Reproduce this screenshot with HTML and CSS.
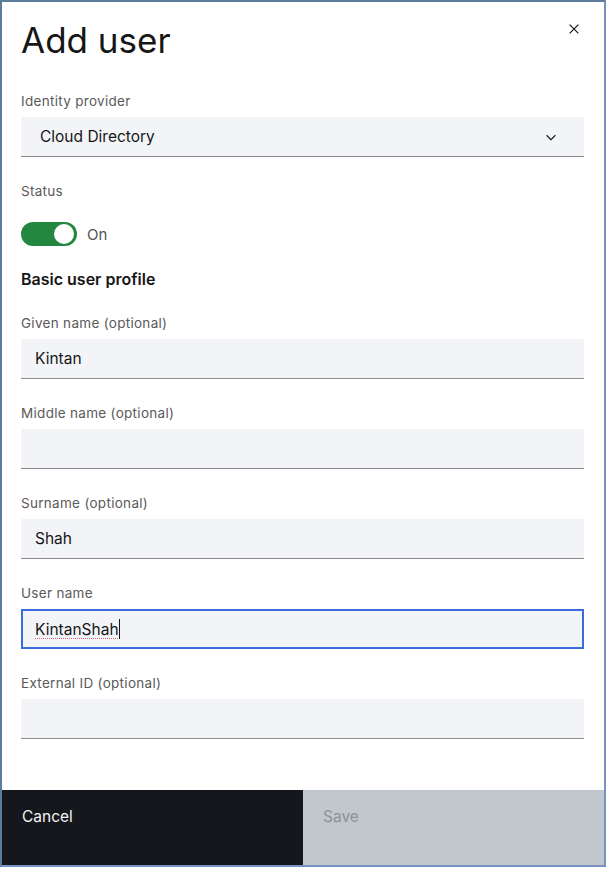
FILE: index.html
```
<!DOCTYPE html>
<html>
<head>
<meta charset="utf-8">
<link rel="stylesheet" href="styles.css">
</head>
<body>
<div class="frame">
  <div class="modal">
    <div class="header">
      <h1 class="title">Add user</h1>
      <button class="close" aria-label="Close">
        <svg width="14" height="14" viewBox="0 0 16 16"><path d="M3 3 L13 13 M13 3 L3 13" stroke="#161616" stroke-width="1.4" fill="none"/></svg>
      </button>
    </div>
    <div class="body">
      <div class="field first">
        <div class="label">Identity provider</div>
        <div class="input select">
          <span>Cloud Directory</span>
          <svg width="14" height="14" viewBox="0 0 16 16"><path d="M3 6 L8 11 L13 6" stroke="#161616" stroke-width="1.3" fill="none"/></svg>
        </div>
      </div>
      <div class="field status">
        <div class="label">Status</div>
        <div class="toggle-row">
          <span class="toggle"><span class="knob"></span></span>
          <span class="toggle-text">On</span>
        </div>
      </div>
      <div class="section">Basic user profile</div>
      <div class="field">
        <div class="label">Given name (optional)</div>
        <div class="input">Kintan</div>
      </div>
      <div class="field">
        <div class="label">Middle name (optional)</div>
        <div class="input"></div>
      </div>
      <div class="field">
        <div class="label">Surname (optional)</div>
        <div class="input">Shah</div>
      </div>
      <div class="field">
        <div class="label">User name</div>
        <div class="input focused"><span class="spell">KintanShah</span><span class="caret"></span></div>
      </div>
      <div class="field">
        <div class="label">External ID (optional)</div>
        <div class="input"></div>
      </div>
    </div>
    <div class="footer">
      <div class="btn cancel">Cancel</div>
      <div class="btn save">Save</div>
    </div>
  </div>
</div>
</body>
</html>
```
FILE: styles.css
```
html, body {
  margin: 0;
  padding: 0;
  background: #ffffff;
}
body {
  font-family: "Inter", "Noto Sans", sans-serif;
  color: #161616;
}
.frame {
  box-sizing: border-box;
  width: 606px;
  height: 867px;
  border-top: 2px solid #5b7d9b;
  border-left: 2px solid #5b7d9b;
  border-right: 2px solid #7892c6;
  border-bottom: 2px solid #7892c6;
}
.modal {
  height: 100%;
  display: flex;
  flex-direction: column;
}
.header {
  display: flex;
  justify-content: space-between;
  align-items: flex-start;
  padding: 0 0 0 19px;
}
.title {
  margin: 18px 0 0 0;
  font-size: 35px;
  font-weight: 400;
  line-height: 40px;
  letter-spacing: 0;
}
.close {
  background: none;
  border: 0;
  padding: 0;
  margin: 19px 22px 0 0;
  width: 16px;
  height: 16px;
  display: flex;
  align-items: center;
  justify-content: center;
}
.body {
  flex: 1;
  padding: 0 20px 0 19px;
}
.field {
  display: flex;
  flex-direction: column;
}
.label {
  font-size: 13.5px;
  line-height: 16px;
  color: #5a5a5a;
  letter-spacing: 0.3px;
  margin-top: 26px;
  margin-bottom: 8px;
}
.field.first .label {
  margin-top: 33px;
}
.input {
  box-sizing: border-box;
  height: 40px;
  background: #f2f4f8;
  border-bottom: 1px solid #8d8d8d;
  padding: 0 19px 0 14px;
  font-size: 15.5px;
  display: flex;
  align-items: center;
  color: #161616;
}
.select {
  justify-content: space-between;
  padding-left: 19px;
  padding-right: 26px;
}
.focused {
  border: 2px solid #3a6ddb;
  padding-left: 12px;
}
.spell {
  text-decoration-line: underline;
  text-decoration-style: dotted;
  text-decoration-color: #e06a6a;
  text-decoration-thickness: 1px;
  text-underline-offset: 3px;
}
.caret {
  display: inline-block;
  width: 1px;
  height: 20px;
  background: #161616;
}
.field.status .label {
  margin-top: 26px;
  margin-bottom: 23px;
}
.toggle-row {
  display: flex;
  align-items: center;
  gap: 10px;
}
.toggle {
  box-sizing: border-box;
  width: 56px;
  height: 24px;
  border-radius: 12px;
  background: #24873f;
  display: flex;
  align-items: center;
  justify-content: flex-end;
  padding-right: 3px;
}
.knob {
  width: 20px;
  height: 20px;
  border-radius: 50%;
  background: #ffffff;
}
.toggle-text {
  font-size: 15px;
  color: #525252;
}
.section {
  font-size: 16px;
  font-weight: 600;
  line-height: 18px;
  margin-top: 24px;
  margin-bottom: 1px;
}
.footer {
  display: flex;
  height: 75px;
}
.btn {
  flex: 1;
  font-size: 15.5px;
  padding: 17px 20px;
  box-sizing: border-box;
}
.cancel {
  background: #14171b;
  color: #f4f4f4;
}
.save {
  background: #c1c7cd;
  color: #8d9298;
}
```
